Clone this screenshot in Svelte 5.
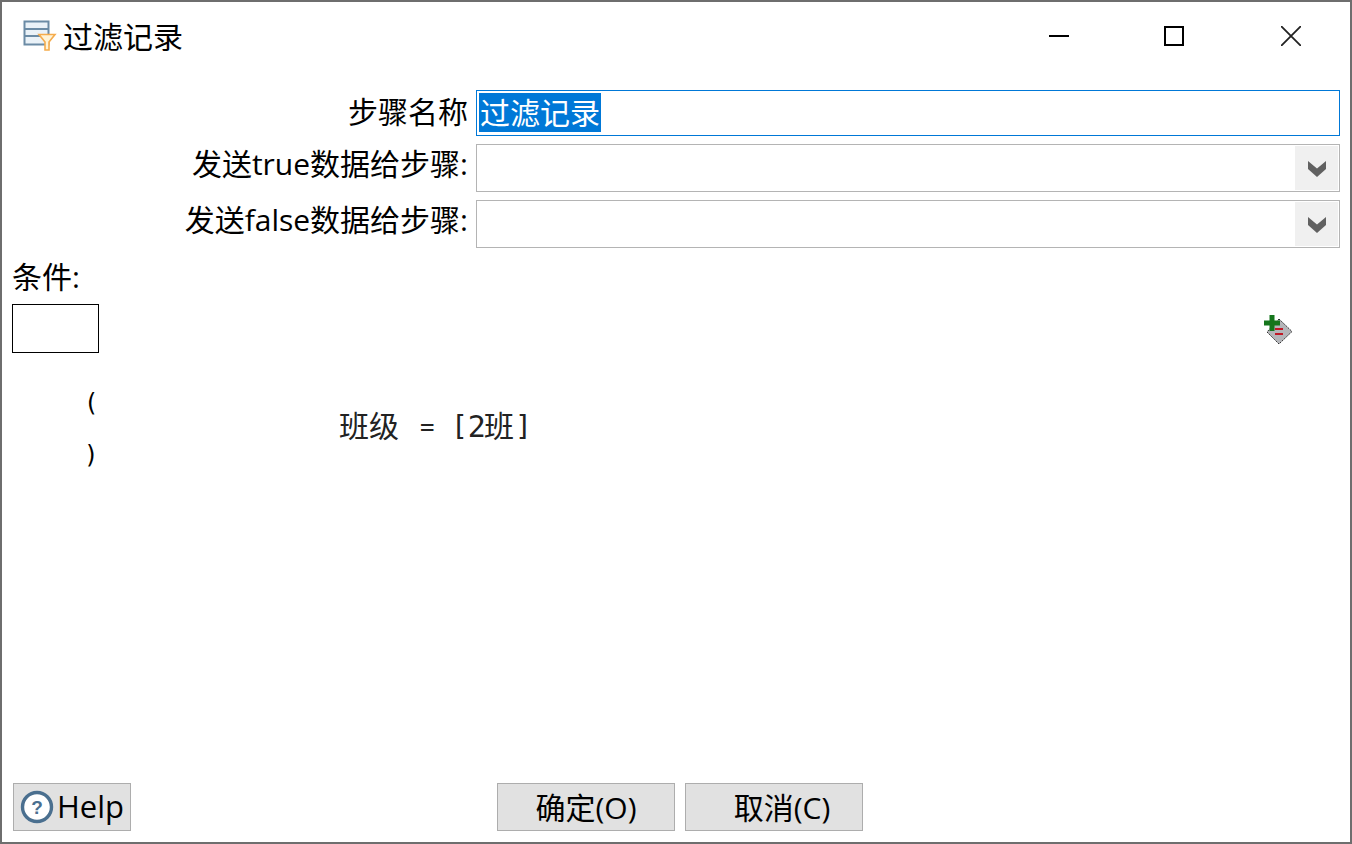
<script>
	const fields = [
		{ label: '发送true数据给步骤:' },
		{ label: '发送false数据给步骤:' }
	];
</script>

<div class="window">
	<header class="titlebar">
		<svg class="app-icon" width="36" height="36" viewBox="0 0 36 36">
			<rect x="2.5" y="3.5" width="24" height="23" fill="#eaf2f8" stroke="#6b8ba5" stroke-width="2" />
			<path d="M3 11h23M3 18h23" stroke="#6b8ba5" stroke-width="2" />
			<path d="M17 16.5h16l-6 7.5v8h-4v-8z" fill="#fff3d6" stroke="#f5ac4c" stroke-width="1.6" />
		</svg>
		<span class="title">过滤记录</span>
		<div class="controls">
			<svg width="20" height="20" viewBox="0 0 20 20"><path d="M0 10h20" stroke="#000" stroke-width="2" /></svg>
			<svg width="20" height="20" viewBox="0 0 20 20"><rect x="1" y="1" width="18" height="18" fill="none" stroke="#000" stroke-width="2" /></svg>
			<svg width="20" height="20" viewBox="0 0 20 20"><path d="M0 0l20 20M20 0L0 20" stroke="#222" stroke-width="1.8" /></svg>
		</div>
	</header>

	<div class="form">
		<div class="row first">
			<span class="label">步骤名称</span>
			<div class="name-input"><span class="selected">过滤记录</span></div>
		</div>
		{#each fields as f}
			<div class="row">
				<span class="label">{f.label}</span>
				<div class="combo">
					<div class="arrow">
						<svg width="18" height="16" viewBox="0 0 18 16"><path d="M0 0l9 7.5L18 0v8l-9 8-9-8z" fill="#616161" /></svg>
					</div>
				</div>
			</div>
		{/each}
	</div>

	<div class="cond-label">条件:</div>
	<div class="cond-tools">
		<div class="cond-box"></div>
		<svg class="add-icon" width="32" height="34" viewBox="0 0 32 34">
			<path d="M17 6l13 12.5L17 31 5 19z" fill="#b4b5b9" stroke="#333" stroke-dasharray="2 1" />
			<path d="M2 10h16M10 2v16" stroke="#15761c" stroke-width="5" />
			<path d="M13 16h8M13 21h8" stroke="#c01826" stroke-width="2" />
		</svg>
	</div>

	<div class="tree">
		<div class="paren">(</div>
		<div class="expr">
			<span class="field">班级</span>
			<span class="op">=</span>
			<span class="value"><span class="b">[</span><span class="v">2班</span><span class="b">]</span></span>
		</div>
		<div class="paren">)</div>
	</div>

	<footer class="buttons">
		<button class="help">
			<svg width="34" height="34" viewBox="0 0 34 34">
				<circle cx="17" cy="17" r="14.5" fill="#fff" stroke="#4a6f8f" stroke-width="3.4" />
				<text x="17" y="23.5" text-anchor="middle" font-size="19" font-weight="700" font-family="Liberation Sans" fill="#4a6f8f">?</text>
			</svg>
			<span class="help-text">Help</span>
		</button>
		<div class="center">
			<button>确定(O)</button>
			<button class="cancel">取消(C)</button>
		</div>
	</footer>
</div>

<style>
	:global(body) {
		background: #fff;
	}

	.window {
		box-sizing: border-box;
		width: 1352px;
		height: 844px;
		border: 2px solid #6e6e6e;
		background: #fff;
		display: flex;
		flex-direction: column;
		font-family: "Open Sans", "Noto Sans CJK SC", sans-serif;
		font-size: 30px;
		color: #000;
		overflow: hidden;
	}

	.titlebar {
		display: flex;
		align-items: center;
		height: 68px;
		padding-left: 20px;
		flex: none;
	}

	.title {
		margin-left: 5px;
		margin-top: 2px;
		line-height: 66px;
	}

	.controls {
		margin-left: auto;
		display: flex;
		margin-right: 49px;
	}

	.controls svg + svg {
		margin-left: 95px;
	}

	.controls svg:last-child {
		margin-left: 97px;
	}

	.form {
		display: flex;
		flex-direction: column;
		gap: 8px;
		padding-top: 20px;
		padding-right: 10px;
	}

	.row {
		display: flex;
		height: 48px;
		gap: 8px;
	}

	.row.first {
		height: 46px;
	}

	.label {
		width: 466px;
		text-align: right;
		line-height: 40px;
		white-space: nowrap;
	}

	.first .label {
		line-height: 44px;
	}

	.name-input {
		flex: 1;
		box-sizing: border-box;
		border: 1px solid #0078d7;
		padding: 1px 2px;
		line-height: 42px;
	}

	.selected {
		display: inline-block;
		line-height: 39px;
		padding: 0 1px;
		background: #0078d7;
		color: #fff;
	}

	.combo {
		flex: 1;
		box-sizing: border-box;
		border: 1px solid #b4b4b4;
		padding: 1px;
		display: flex;
		justify-content: flex-end;
	}

	.arrow {
		width: 43px;
		background: #f0f0f0;
		display: flex;
		align-items: center;
		justify-content: center;
		padding-top: 2px;
	}

	.cond-label {
		padding-left: 10px;
		line-height: 40px;
		margin-top: 9px;
	}

	.cond-tools {
		display: flex;
		justify-content: space-between;
		padding: 7px 56px 0 10px;
	}

	.cond-box {
		width: 85px;
		height: 47px;
		border: 1px solid #000;
	}

	.add-icon {
		margin-top: 9px;
	}

	.tree {
		flex: 1;
		position: relative;
		font-family: "DejaVu Sans Mono", "Noto Sans CJK SC", monospace;
		font-size: 24px;
		padding: 30px 0 0 82px;
	}

	.paren {
		height: 52px;
		line-height: 40px;
	}

	.expr {
		position: absolute;
		left: 337px;
		top: 54px;
		line-height: 40px;
		display: flex;
		white-space: pre;
		color: #222;
	}

	.field {
		font-size: 30px;
		width: 81px;
	}

	.op {
		width: 31px;
	}

	.value {
		display: flex;
	}

	.b {
		font-size: 28px;
	}

	.v {
		font-size: 30px;
		margin-right: 3px;
		letter-spacing: -2px;
	}

	.buttons {
		display: flex;
		padding: 0 0 11px 11px;
		position: relative;
		height: 48px;
		flex: none;
	}

	button {
		box-sizing: border-box;
		height: 48px;
		width: 178px;
		background: #e1e1e1;
		border: 1px solid #adadad;
		font: inherit;
		color: #000;
		padding: 0 0 6px;
	}

	.cancel {
		padding-left: 16px;
	}

	.help {
		width: 118px;
		display: flex;
		align-items: center;
		gap: 3px;
		padding: 0 0 0 6px;
	}

	.help-text {
		font-size: 31px;
		margin-top: -2px;
	}

	.center {
		position: absolute;
		left: 495px;
		top: 0;
		display: flex;
		gap: 10px;
	}
</style>
